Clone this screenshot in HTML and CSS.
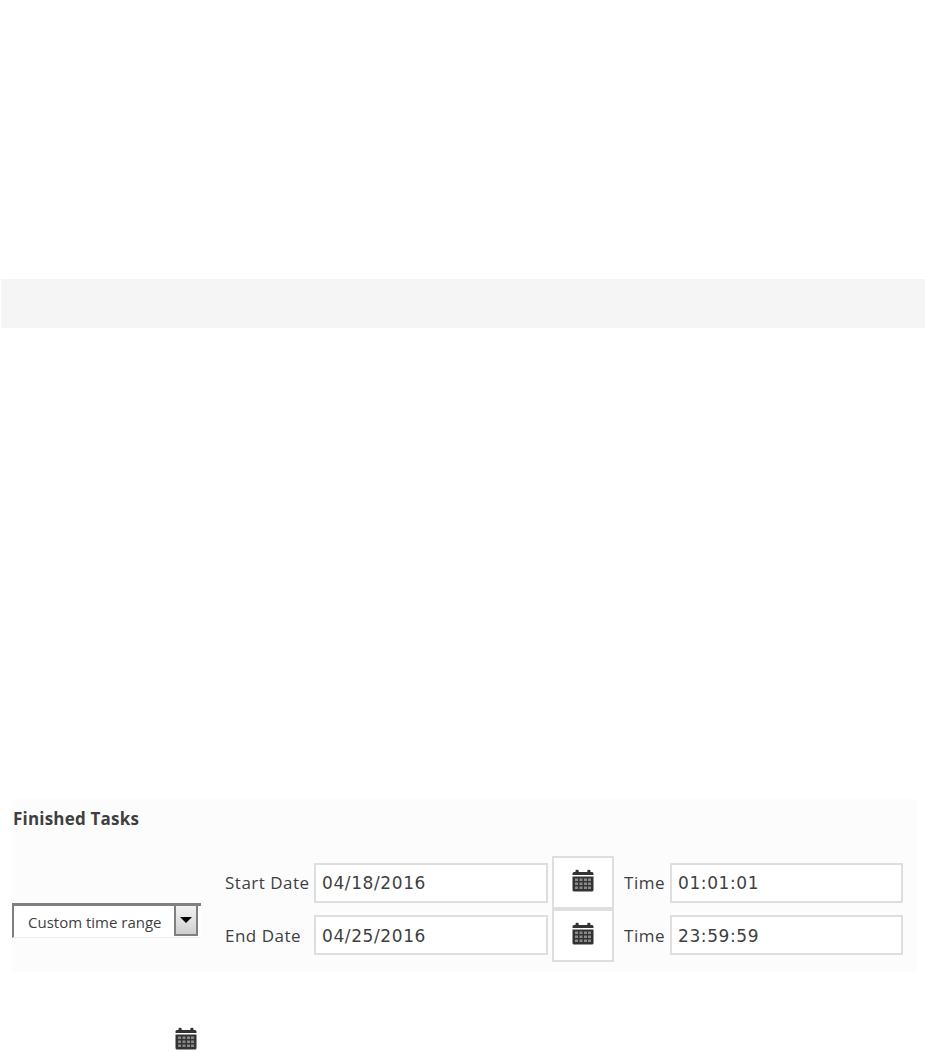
FILE: index.html
```html
<!DOCTYPE html>
<html>
	<head>
		<meta charset="UTF-8">
		<title>Finished Tasks</title>
		<link rel="stylesheet" href="styles.css">
	</head>
	<body>
		<div class="bar"></div>
		<div class="panel">
			<div class="panel-title">Finished Tasks</div>
			<div class="filter">
				<div class="range">
					<span class="range-text">Custom time range</span>
					<span class="range-btn"><i class="range-arrow"></i></span>
				</div>
				<div class="dates">
					<label class="lbl">Start Date</label>
					<input class="field" type="text" value="04/18/2016">
					<button class="cal-btn" type="button">
						<svg class="cal" viewBox="0 0 22 23"><use href="#cal"></use></svg>
					</button>
					<label class="lbl lbl-time">Time</label>
					<input class="field" type="text" value="01:01:01">

					<label class="lbl">End Date</label>
					<input class="field field-low" type="text" value="04/25/2016">
					<button class="cal-btn" type="button">
						<svg class="cal" viewBox="0 0 22 23"><use href="#cal"></use></svg>
					</button>
					<label class="lbl lbl-time">Time</label>
					<input class="field field-low" type="text" value="23:59:59">
				</div>
			</div>
		</div>
		<div class="foot">
			<svg class="cal" viewBox="0 0 22 23"><use href="#cal"></use></svg>
		</div>
		<svg class="defs" width="0" height="0">
			<symbol id="cal" viewBox="0 0 22 23">
				<path fill="#333" d="M.5 6V4.500Q.5 3 2 3H3.500V2Q3.500 .8 4.700 .8H5.500Q6.700 .8 6.700 2V3H15.300V2Q15.300 .8 16.500 .8H17.300Q18.500 .8 18.500 2V3H20Q21.500 3 21.500 4.500V6Z"/>
				<path fill="#333" d="M.5 7.500H21.500V21Q21.500 22.500 20 22.500H2Q.5 22.500 .5 21Z"/>
				<path fill="#8a8a8a" d="M3 9.500h3v2.500h-3zM7.500 9.500h3v2.500h-3zM12 9.500h3v2.500h-3zM16 9.500h3v2.500h-3zM3 13.500h3v2.500h-3zM7.500 13.500h3v2.500h-3zM12 13.500h3v2.500h-3zM16 13.500h3v2.500h-3zM3 17.500h3v2.500h-3zM7.500 17.500h3v2.500h-3zM12 17.500h3v2.500h-3zM16 17.500h3v2.500h-3z"/>
			</symbol>
		</svg>
	</body>
</html>
```

FILE: styles.css
```css
html, body {
	height: 100%;
}
body {
	margin: 0;
	padding-top: 279px;
	box-sizing: border-box;
	background: #fff;
	color: #3f3f3f;
	font-family: "Open Sans", "Noto Sans", sans-serif;
	font-size: 17px;
	letter-spacing: .5px;
	overflow: hidden;
}
.bar {
	height: 49px;
	margin-left: 1px;
	background: #f5f5f5;
}
.panel {
	width: 905px;
	height: 173px;
	margin: 471px 0 0 12px;
	background: #fcfcfc;
}
.panel-title {
	height: 57px;
	padding: 9px 0 0 1px;
	box-sizing: border-box;
	font-size: 17px;
	font-weight: 700;
	letter-spacing: .2px;
	line-height: 22px;
}
.filter {
	display: flex;
	align-items: flex-start;
}
.range {
	display: flex;
	justify-content: space-between;
	width: 189px;
	height: 35px;
	margin-top: 47px;
	box-sizing: border-box;
	padding: 0 3px 0 14px;
	background: #fff;
	border-top: 3px solid #808080;
	border-left: 2px solid #808080;
	border-bottom: 1px solid #eee;
	font-size: 15px;
	letter-spacing: 0;
}
.range-text {
	line-height: 32px;
}
.range-btn {
	display: flex;
	align-items: center;
	justify-content: center;
	width: 24px;
	height: 30px;
	box-sizing: border-box;
	border: 2px solid #808080;
	border-top: 0;
	background: linear-gradient(#f2f2f2, #cfcfcf);
}
.range-arrow {
	width: 0;
	height: 0;
	border-left: 6px solid transparent;
	border-right: 6px solid transparent;
	border-top: 6px solid #000;
}
.dates {
	display: grid;
	grid-template-columns: 89px 234px 62px 60px 233px;
	grid-auto-rows: 53px;
	margin-left: 24px;
	align-items: center;
}
.lbl {
	line-height: 20px;
}
.lbl-time {
	justify-self: end;
	padding-right: 5px;
}
.field {
	width: 100%;
	height: 40px;
	box-sizing: border-box;
	padding: 0 6px;
	border: 2px solid #dedede;
	background: #fff;
	color: #3f3f3f;
	font-family: "DejaVu Sans", sans-serif;
	font-size: 17px;
	letter-spacing: .6px;
}
.field-low {
	margin-top: -1px;
	padding-top: 2px;
}
.cal-btn {
	display: flex;
	align-items: center;
	justify-content: center;
	width: 62px;
	height: 53px;
	margin-left: 4px;
	padding: 0 0 4px;
	box-sizing: border-box;
	border: 2px solid #dedede;
	background: #fff;
}
.cal {
	display: block;
	width: 22px;
	height: 23px;
}
.foot {
	padding: 55px 0 0 175px;
}
.defs {
	position: absolute;
}
```
